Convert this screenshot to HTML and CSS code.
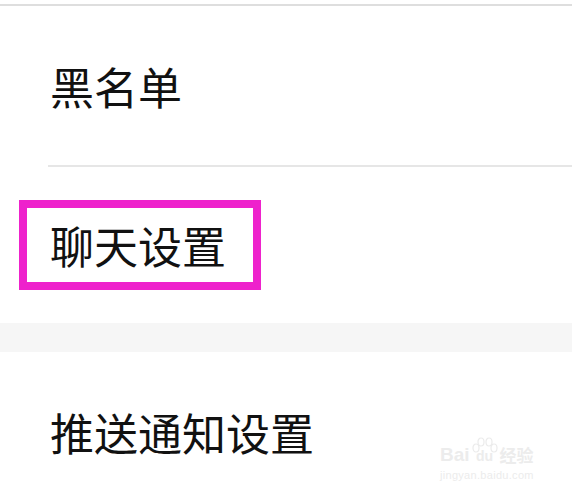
FILE: index.html
```html
<!DOCTYPE html>
<html>
  <head>
    <title>设置</title>
    <link rel="stylesheet" href="styles.css">
  </head>
  <body>
    <div class="settings">
      <div class="group">
        <div class="item">黑名单</div>
        <div class="divider"></div>
        <div class="item item-marked">
          <span class="mark">聊天设置</span>
        </div>
      </div>
      <div class="gap"></div>
      <div class="group">
        <div class="item">推送通知设置</div>
      </div>
    </div>
    <div class="watermark">
      <div class="wm-logo">
        <span class="wm-bai">Bai</span>
        <span class="wm-du">
          <svg class="wm-paw" width="30" height="16" viewBox="0 0 30 16">
            <ellipse cx="6" cy="11" rx="3" ry="4" fill="none" stroke="#ebebeb" stroke-width="1.2"/>
            <ellipse cx="11" cy="5" rx="3" ry="4" fill="none" stroke="#ebebeb" stroke-width="1.2"/>
            <ellipse cx="19" cy="5" rx="3" ry="4" fill="none" stroke="#ebebeb" stroke-width="1.2"/>
            <ellipse cx="24" cy="11" rx="3" ry="4" fill="none" stroke="#ebebeb" stroke-width="1.2"/>
          </svg>
          du
        </span>
        <span class="wm-jy">经验</span>
      </div>
      <div class="wm-url">jingyan.baidu.com</div>
    </div>
  </body>
</html>
```

FILE: styles.css
```css
body {
  margin: 0;
  padding: 0;
  background-color: #fff;
  font-family: "Noto Sans CJK SC", "Noto Sans", sans-serif;
  color: #111;
  overflow: hidden;
}
.settings {
  padding-top: 4px;
}
.group {
  border-top: 2px solid #dedede;
}
.item {
  height: 159px;
  display: flex;
  align-items: center;
  padding-left: 50px;
  font-size: 44px;
  line-height: 44px;
}
.item-marked {
  height: 156px;
  padding-left: 19px;
}
.mark {
  display: inline-block;
  border: 8px solid #ee22cc;
  padding: 15px 27px 15px 23px;
}
.divider {
  margin-left: 48px;
  height: 2px;
  background-color: #e6e6e6;
}
.gap {
  height: 29px;
  background-color: #f6f6f6;
}
.settings > .gap + .group {
  border-top: 0;
}
.watermark {
  position: absolute;
  left: 440px;
  top: 437px;
  color: #ececec;
  font-family: "Liberation Sans", sans-serif;
}
.wm-logo {
  display: flex;
  align-items: flex-end;
  height: 26px;
}
.wm-bai {
  font-size: 19px;
  line-height: 16px;
  font-weight: bold;
}
.wm-du {
  position: relative;
  font-size: 14px;
  line-height: 14px;
  width: 30px;
  text-align: center;
  font-weight: bold;
}
.wm-paw {
  position: absolute;
  left: 0;
  top: -12px;
}
.wm-jy {
  font-family: "Noto Sans CJK SC", sans-serif;
  font-size: 17px;
  line-height: 16px;
  font-weight: bold;
}
.wm-url {
  font-size: 11px;
  margin-top: 6px;
  letter-spacing: 0.3px;
}
```
